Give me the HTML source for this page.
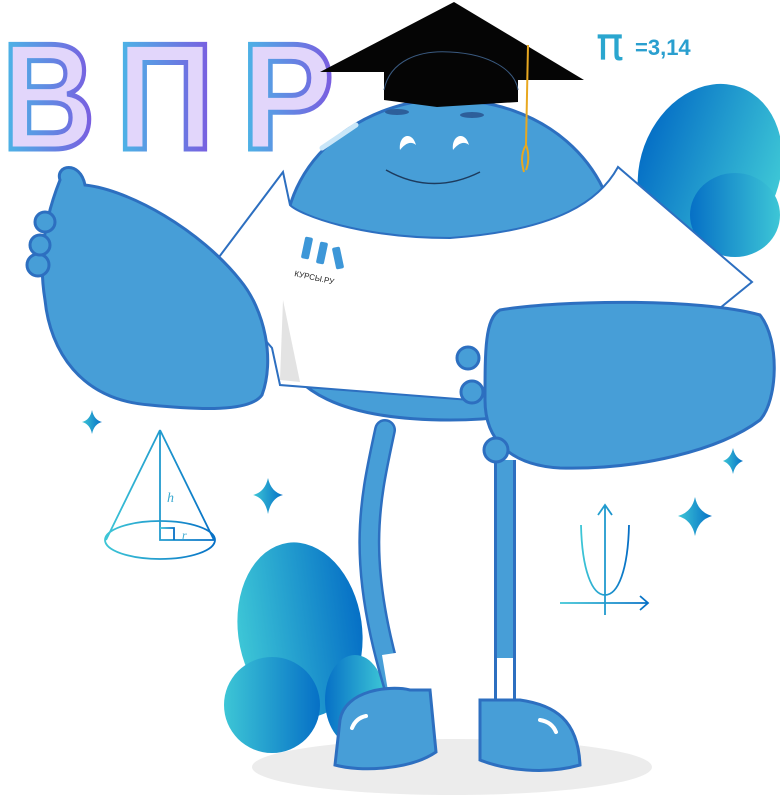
<!DOCTYPE html>
<html><head><meta charset="utf-8"><style>
html,body{margin:0;padding:0;background:#fff;}
svg{display:block}
</style></head><body>
<svg width="780" height="797" viewBox="0 0 780 797" xmlns="http://www.w3.org/2000/svg">
<defs>
<linearGradient id="lg" x1="0" y1="0" x2="1" y2="0"><stop offset="0" stop-color="#3dc6d6"/><stop offset="1" stop-color="#0670c6"/></linearGradient>
<linearGradient id="lg2" x1="1" y1="0" x2="0" y2="0"><stop offset="0" stop-color="#3dc6d6"/><stop offset="1" stop-color="#0670c6"/></linearGradient>
<linearGradient id="tg" x1="0" y1="0" x2="1" y2="0"><stop offset="0" stop-color="#4ab8e6"/><stop offset="1" stop-color="#7b5ae0"/></linearGradient>
</defs>
<ellipse cx="452" cy="767" rx="200" ry="28" fill="#ececec"/>
<g font-family="Liberation Sans, sans-serif" font-weight="bold" font-size="152" fill="#e2d6fb" stroke="url(#tg)" stroke-width="5" lengthAdjust="spacingAndGlyphs">
<text x="2" y="149" textLength="93" lengthAdjust="spacingAndGlyphs">В</text>
<text x="116" y="149" textLength="98" lengthAdjust="spacingAndGlyphs">П</text>
<text x="241" y="149" textLength="93" lengthAdjust="spacingAndGlyphs">Р</text>
</g>
<text x="596" y="60" font-family="DejaVu Sans, sans-serif" font-size="46" fill="#2aa6cf">π</text>
<text x="635" y="55" font-family="Liberation Sans, sans-serif" font-weight="bold" font-size="22" fill="#2a9fcf">=3,14</text>
<ellipse cx="710" cy="170" rx="70" ry="88" fill="url(#lg2)" transform="rotate(20 710 170)"/>
<ellipse cx="735" cy="215" rx="45" ry="42" fill="url(#lg2)"/>
<ellipse cx="300" cy="630" rx="62" ry="88" fill="url(#lg)" transform="rotate(-8 300 630)"/>
<ellipse cx="272" cy="705" rx="48" ry="48" fill="url(#lg)"/>
<ellipse cx="355" cy="700" rx="30" ry="45" fill="url(#lg2)"/>
<path d="M385 430 C370 500 355 560 395 690" stroke="#2d6fc0" stroke-width="22" fill="none" stroke-linecap="round"/>
<path d="M385 430 C370 500 355 560 395 690" stroke="#479ed7" stroke-width="17" fill="none" stroke-linecap="round"/>
<rect x="494" y="460" width="22" height="240" fill="#2d6fc0"/>
<rect x="497" y="460" width="16" height="240" fill="#479ed7"/>
<path d="M382 655 L402 652 L408 700 L390 703Z" fill="#fff"/>
<rect x="497" y="658" width="16" height="45" fill="#fff"/>
<path d="M340 720 C345 690 390 685 410 690 L430 690 L436 752 C410 770 360 772 335 765 Z" fill="#479ed7" stroke="#2d6fc0" stroke-width="3"/>
<path d="M480 700 L520 700 C555 705 578 720 580 765 C545 775 505 770 480 760 Z" fill="#479ed7" stroke="#2d6fc0" stroke-width="3"/>
<path d="M352 728 Q356 718 366 716" stroke="#fff" stroke-width="4" fill="none" stroke-linecap="round"/>
<path d="M540 720 Q552 722 556 732" stroke="#fff" stroke-width="4" fill="none" stroke-linecap="round"/>
<path d="M285 260 C275 150 380 95 450 100 C540 100 615 160 618 250 L625 330 C620 390 550 420 450 420 C350 420 280 395 278 330 Z" fill="#479ed7" stroke="#2d6fc0" stroke-width="3"/>
<path d="M283 172 L207 273 L272 348 L280 385 L470 400 L615 360 L720 308 L752 282 L618 167 C600 200 560 230 450 238 C360 238 300 215 290 205 Z" fill="#fff" stroke="#2d6fc0" stroke-width="2"/>
<path d="M283 300 L280 380 L300 382 Z" fill="#e3e3e3"/>
<g fill="#3d97d8">
<rect x="303" y="237" width="8" height="22" rx="2" transform="rotate(12 307 248)"/>
<rect x="318" y="242" width="8" height="22" rx="2" transform="rotate(12 322 253)"/>
<rect x="334" y="247" width="8" height="22" rx="2" transform="rotate(-12 338 258)"/>
</g>
<text x="294" y="276" font-family="Liberation Sans, sans-serif" font-size="8" fill="#222" transform="rotate(12 294 276)">КУРСЫ.РУ</text>
<path d="M400 150 C398 135 412 130 416 145 C410 140 404 145 400 150Z" fill="#fff"/>
<path d="M453 150 C451 135 465 130 469 145 C463 140 457 145 453 150Z" fill="#fff"/>
<ellipse cx="397" cy="112" rx="12" ry="3" fill="#2d5f9a"/>
<ellipse cx="472" cy="115" rx="12" ry="3" fill="#2d5f9a"/>
<path d="M386 170 Q432 196 480 172" stroke="#1d3b5e" stroke-width="1.5" fill="none"/>
<path d="M322 148 L356 125" stroke="#c9e6f8" stroke-width="5" stroke-linecap="round"/>
<path d="M384 100 L384 72 L320 72 L454 2 L584 80 L518 80 L518 102 L437 107 Z" fill="#050505"/>
<path d="M384 90 C390 60 420 50 450 52 C490 54 515 70 518 90" stroke="#3a5a80" stroke-width="1" fill="none"/>
<path d="M528 45 L526 145 M526 145 C520 155 522 165 524 172 M526 145 C530 155 528 165 526 170" stroke="#e8a820" stroke-width="2" fill="none"/>
<path d="M60 180 C55 165 80 160 85 185 C130 190 200 230 240 280 C265 310 275 360 262 395 C250 412 200 410 150 405 C80 400 50 350 45 300 C40 270 40 230 60 180Z" fill="#479ed7" stroke="#2d6fc0" stroke-width="3"/>
<circle cx="38" cy="265" r="11" fill="#479ed7" stroke="#2d6fc0" stroke-width="3"/>
<circle cx="40" cy="245" r="10" fill="#479ed7" stroke="#2d6fc0" stroke-width="3"/>
<circle cx="45" cy="222" r="10" fill="#479ed7" stroke="#2d6fc0" stroke-width="3"/>
<path d="M500 310 C560 300 700 298 760 315 C780 340 778 400 760 420 C720 450 640 470 560 468 C510 465 485 440 485 400 C485 350 485 318 500 310Z" fill="#479ed7" stroke="#2d6fc0" stroke-width="3"/>
<circle cx="468" cy="358" r="11" fill="#479ed7" stroke="#2d6fc0" stroke-width="3"/>
<circle cx="472" cy="392" r="11" fill="#479ed7" stroke="#2d6fc0" stroke-width="3"/>
<circle cx="496" cy="450" r="12" fill="#479ed7" stroke="#2d6fc0" stroke-width="3"/>
<g fill="url(#lg)">
<path d="M92 410 Q94 420 102 422 Q94 424 92 434 Q90 424 82 422 Q90 420 92 410Z"/>
<path d="M268 478 Q271 492 283 495 Q271 498 268 514 Q265 498 253 495 Q265 492 268 478Z"/>
<path d="M733 448 Q735 458 743 461 Q735 464 733 474 Q731 464 723 461 Q731 458 733 448Z"/>
<path d="M695 497 Q698 512 712 516 Q698 520 695 536 Q692 520 678 516 Q692 512 695 497Z"/>
</g>
<g stroke="url(#lg)" stroke-width="1.8" fill="none">
<path d="M160 430 L106 540 M160 430 L214 540 M160 430 L160 540 L214 540"/>
<ellipse cx="160" cy="540" rx="55" ry="19"/>
<path d="M160 528 L174 528 L174 540"/>
<path d="M605 505 L605 615 M598 515 L605 505 L612 515 M560 603 L648 603 M640 596 L648 603 L640 610"/>
<path d="M581 525 C582 570 592 595 605 595 C618 595 628 570 629 525"/>
</g>
<text x="167" y="502" font-family="Liberation Serif, serif" font-style="italic" font-size="14" fill="#3aa9d0">h</text>
<text x="182" y="539" font-family="Liberation Serif, serif" font-style="italic" font-size="12" fill="#3aa9d0">r</text>
</svg>
</body></html>
